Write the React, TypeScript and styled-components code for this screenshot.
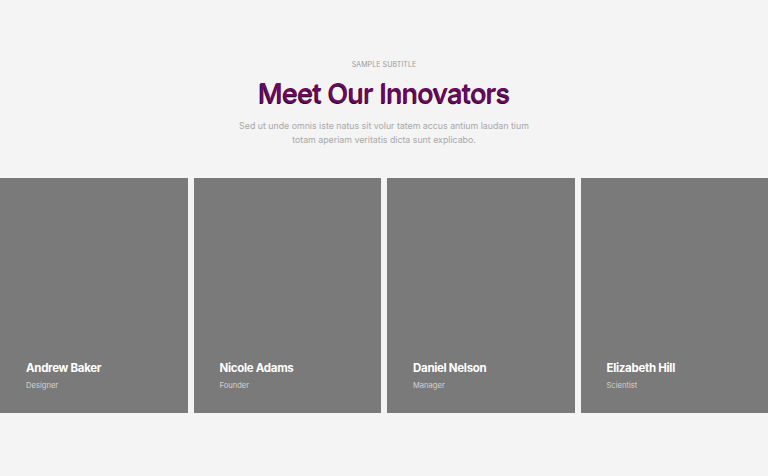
import React from "react";
import styled, { createGlobalStyle } from "styled-components";

const Global = createGlobalStyle`
  html, body { margin: 0; padding: 0; background: #f4f4f4; }
  body { font-family: Inter, "Noto Sans", sans-serif; }
`;

const Page = styled.div`
  width: 768px;
  height: 476px;
  background: #f4f4f4;
  display: flex;
  flex-direction: column;
  align-items: center;
  padding-top: 60px;
  box-sizing: border-box;
`;

const Subtitle = styled.div`
  font-size: 7px;
  letter-spacing: 0.1px;
  color: #9a9a9a;
  text-transform: uppercase;
  line-height: 9px;
`;

const Title = styled.h1`
  margin: 9px 0 0;
  font-size: 27px;
  font-weight: 500;
  letter-spacing: -0.65px;
  line-height: 32px;
  color: #6e0a5e;
  text-shadow: -0.7px 0.7px 0 #1c1020;
`;

const Lead = styled.p`
  margin: 9px 0 0;
  width: 300px;
  text-align: center;
  font-size: 8.8px;
  line-height: 14px;
  color: #a8a8a8;
`;

const Grid = styled.div`
  margin-top: 31px;
  width: 100%;
  display: grid;
  grid-template-columns: repeat(4, 1fr);
  gap: 6px;
`;

const Card = styled.div`
  height: 235px;
  background: #7a7a7b;
  display: flex;
  flex-direction: column;
  justify-content: flex-end;
  padding: 0 26px 22px;
  box-sizing: border-box;
`;

const Name = styled.div`
  font-size: 11.5px;
  font-weight: 700;
  color: #ffffff;
  line-height: 15px;
  letter-spacing: -0.3px;
`;

const Role = styled.div`
  margin-top: 5px;
  font-size: 7.6px;
  color: #d2d2d2;
  line-height: 10px;
`;

const people = [
  { name: "Andrew Baker", role: "Designer" },
  { name: "Nicole Adams", role: "Founder" },
  { name: "Daniel Nelson", role: "Manager" },
  { name: "Elizabeth Hill", role: "Scientist" },
];

export default function App() {
  return (
    <>
      <Global />
      <Page>
        <Subtitle>Sample Subtitle</Subtitle>
        <Title>Meet Our Innovators</Title>
        <Lead>
          Sed ut unde omnis iste natus sit volur tatem accus antium laudan tium totam aperiam veritatis dicta sunt explicabo.
        </Lead>
        <Grid>
          {people.map((p) => (
            <Card key={p.name}>
              <Name>{p.name}</Name>
              <Role>{p.role}</Role>
            </Card>
          ))}
        </Grid>
      </Page>
    </>
  );
}
